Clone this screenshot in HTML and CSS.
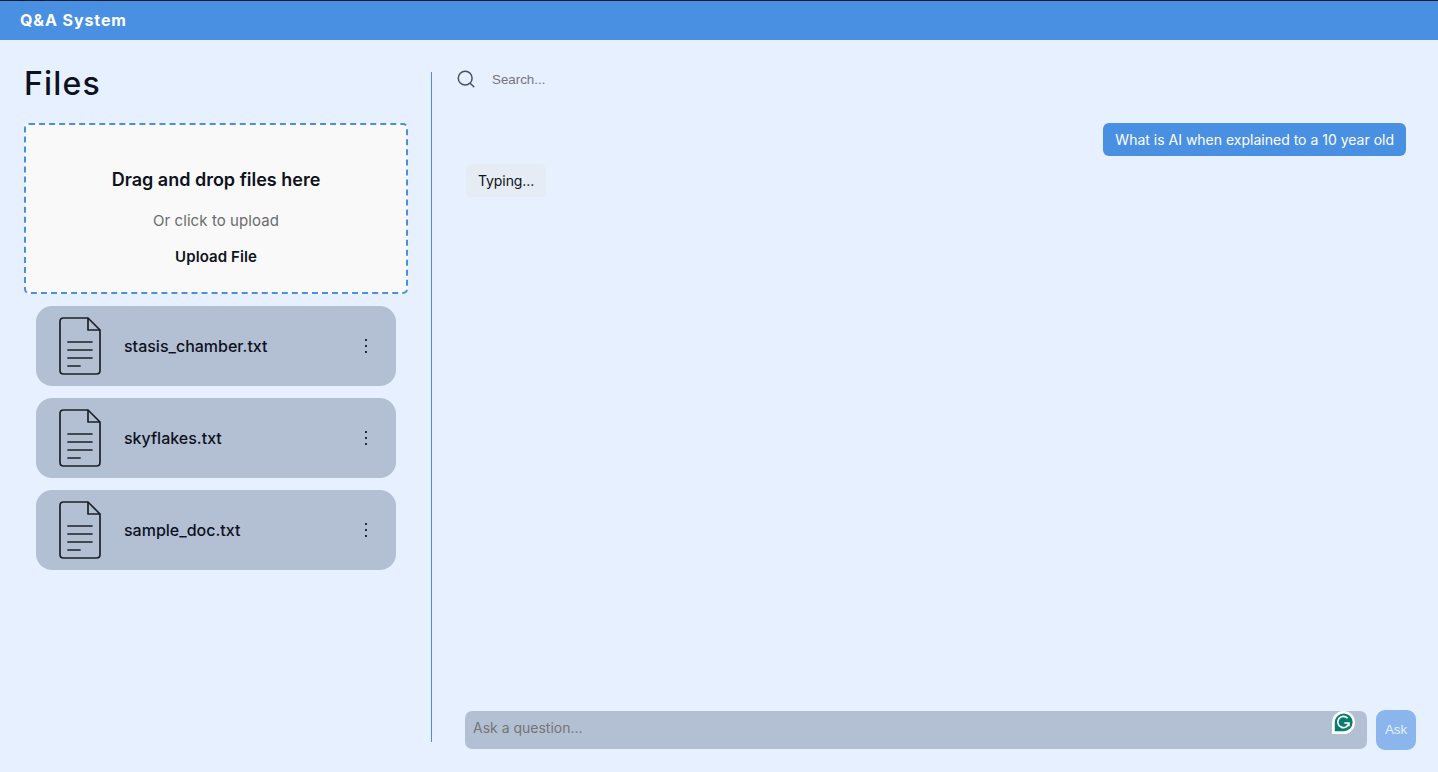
FILE: index.html
```html
<!DOCTYPE html>
<html lang="en">
<head>
<meta charset="utf-8">
<title>Q&amp;A System</title>
<link rel="stylesheet" href="styles.css">
</head>
<body>
<svg class="defs" width="0" height="0" aria-hidden="true">
  <symbol id="doc" viewBox="0 0 44 60">
    <g fill="none" stroke="#1d2127" stroke-width="1.7" stroke-linejoin="round" stroke-linecap="round">
      <path d="M30 2H5.500Q2 2 2 5.500V54.500Q2 58 5.500 58H38.500Q42 58 42 54.500V14L30 2V14H42"/>
      <path d="M10 26H34M10 34H34M10 42H34M10 50H22"/>
    </g>
  </symbol>
</svg>
<header class="topbar">Q&amp;A System</header>
<main class="layout">
  <aside class="files">
    <h1 class="files-title">Files</h1>
    <section class="dropzone">
      <h2 class="drop-title">Drag and drop files here</h2>
      <p class="drop-hint">Or click to upload</p>
      <button class="upload">Upload File</button>
    </section>
    <ul class="file-list">
      <li class="file"><svg class="doc"><use href="#doc"/></svg><span class="name">stasis_chamber.txt</span><span class="menu"><i></i><i></i><i></i></span></li>
      <li class="file"><svg class="doc"><use href="#doc"/></svg><span class="name">skyflakes.txt</span><span class="menu"><i></i><i></i><i></i></span></li>
      <li class="file"><svg class="doc"><use href="#doc"/></svg><span class="name">sample_doc.txt</span><span class="menu"><i></i><i></i><i></i></span></li>
    </ul>
  </aside>
  <div class="divider"></div>
  <section class="chat">
    <div class="search">
      <svg class="search-icon" viewBox="0 0 18 18" fill="none" stroke="#475069" stroke-width="1.500" stroke-linecap="round"><circle cx="8.200" cy="8.200" r="6.900"/><path d="M13.200 13.200L16.800 16.800"/></svg>
      <input class="search-input" placeholder="Search...">
    </div>
    <div class="messages">
      <div class="bubble sent">What is AI when explained to a 10 year old</div>
      <div class="bubble received">Typing...</div>
    </div>
    <div class="composer">
      <div class="field">
        <input class="question" placeholder="Ask a question...">
        <svg class="badge" viewBox="0 0 23 23"><path d="M0 23V11.500A11.500 11.500 0 1 1 11.500 23Z" fill="#fff"/><path d="M2.800 20.200V11.300A8.900 8.900 0 1 1 11.700 20.200Z" fill="#077d70"/><path d="M15.600 7.300A5.600 5.600 0 1 0 16.900 12H12.300M14.400 12H16.900V15.200" fill="none" stroke="#fff" stroke-width="1.700"/></svg>
      </div>
      <button class="ask">Ask</button>
    </div>
  </section>
</main>
</body>
</html>
```
FILE: styles.css
```css
* { box-sizing: border-box; }
body {
  margin: 0;
  height: 772px;
  overflow: hidden;
  display: flex;
  flex-direction: column;
  background: #e6f0ff;
  color: #0d1120;
  font-family: Inter, "Liberation Sans", sans-serif;
}
button, input { font-family: inherit; border: 0; padding: 0; background: none; outline: 0; }
.defs { position: absolute; }
.topbar {
  height: 40px;
  border-top: 1px solid #0b1d33;
  padding-left: 20px;
  background: #4a90e2;
  color: #fff;
  font-size: 16px;
  font-weight: 700;
  line-height: 39px;
  letter-spacing: 0.9px;
}
.layout { flex: 1; display: flex; min-height: 0; }
.files { width: 431px; padding: 24px 23px 0 24px; }
.files-title { margin: 0; font-size: 32px; font-weight: 550; line-height: 40px; letter-spacing: 1.2px; }
.dropzone {
  height: 171px;
  margin-top: 19px;
  padding-top: 43px;
  border: 2px dashed #4a90e2;
  border-radius: 5px;
  background: #f9f9f9;
  text-align: center;
  display: flex;
  flex-direction: column;
  align-items: center;
}
.drop-title { margin: 0; font-size: 18px; font-weight: 600; line-height: 24px; }
.drop-hint { margin: 18px 0 0; font-size: 15px; line-height: 22px; letter-spacing: 0.08px; color: #6b6b6b; }
.upload { margin-top: 14px; font-size: 15px; font-weight: 600; line-height: 22px; letter-spacing: 0.08px; color: #0d1120; }
.file-list { list-style: none; margin: 12px 12px 0; padding: 0; display: flex; flex-direction: column; gap: 12px; }
.file { height: 80px; border-radius: 16px; background: #b3c0d4; display: flex; align-items: center; padding: 0 29px 0 22px; }
.doc { width: 44px; height: 60px; }
.name { flex: 1; margin-left: 22px; font-size: 16px; font-weight: 500; line-height: 24px; }
.menu { display: flex; flex-direction: column; gap: 4px; }
.menu i { width: 2px; height: 2px; background: #222b33; }
.divider { width: 1px; height: 670px; margin-top: 32px; background: #4a90e2; }
.chat { flex: 1; display: flex; flex-direction: column; padding: 29px 22px 22px 25px; }
.search { display: flex; align-items: center; height: 20px; }
.search-icon { width: 18px; height: 18px; }
.search-input { margin-left: 17px; font-family: "Liberation Sans", Arial, sans-serif; font-size: 13.333px; }
.search-input::placeholder, .question::placeholder { color: #757575; opacity: 1; }
.messages { flex: 1; margin-top: 34px; padding: 0 10px 0 9px; display: flex; flex-direction: column; gap: 8px; }
.bubble { height: 33px; padding: 0 12px; border-radius: 6px; font-size: 14px; line-height: 34px; }
.sent { align-self: flex-end; background: #4a90e2; color: #fff; }
.received { align-self: flex-start; background: #e5ecf3; letter-spacing: -0.08px; }
.composer { display: flex; align-items: center; gap: 9px; padding-left: 8px; }
.field { position: relative; flex: 1; height: 38px; border-radius: 7px; background: #b3c0d4; }
.question { width: 90%; height: 33px; padding-left: 8px; font-size: 14px; display: block; }
.badge { position: absolute; right: 12.5px; top: 0; width: 23px; height: 23px; }
.ask { width: 40px; height: 40px; padding-bottom: 1px; border-radius: 9px; background: #8ab6ed; color: #e6f0ff; font-family: "Liberation Sans", Arial, sans-serif; font-size: 13.333px; }
```
